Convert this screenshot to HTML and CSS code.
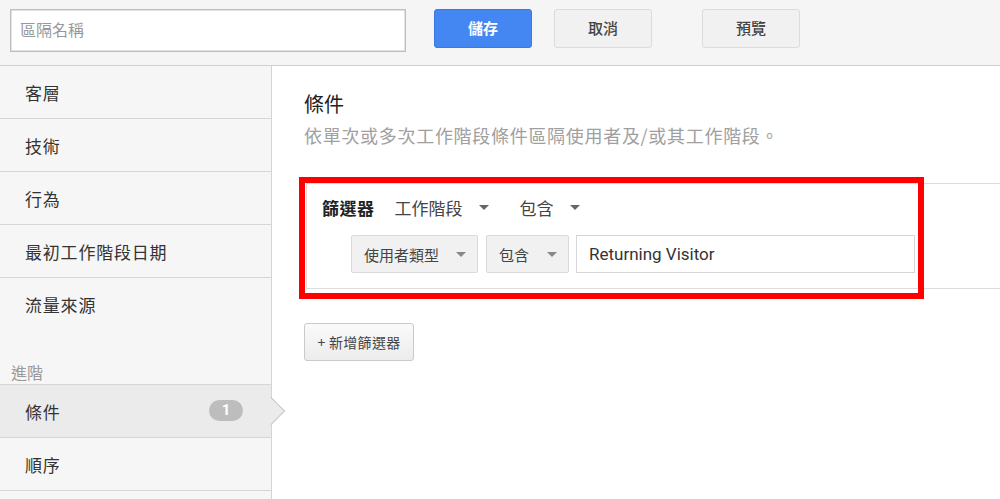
FILE: index.html
```html
<!DOCTYPE html>
<html>
<head>
<meta charset="utf-8">
<title>區隔</title>
<link rel="stylesheet" href="styles.css">
</head>
<body>

<div class="topbar">
	<input class="name_input" type="text" placeholder="區隔名稱">
	<button class="btn btn_save">儲存</button>
	<button class="btn btn_cancel">取消</button>
	<button class="btn btn_preview">預覽</button>
</div>

<div class="page">
	<div class="sidebar">
		<div class="nav_item">客層</div>
		<div class="nav_item">技術</div>
		<div class="nav_item">行為</div>
		<div class="nav_item">最初工作階段日期</div>
		<div class="nav_item nav_last">流量來源</div>
		<div class="nav_label">進階</div>
		<div class="nav_item nav_active">條件<span class="badge">1</span></div>
		<div class="nav_item">順序</div>
	</div>

	<div class="main">
		<div class="title">條件</div>
		<div class="subtitle">依單次或多次工作階段條件區隔使用者及/或其工作階段。</div>

		<div class="filter_box">
			<div class="filter_head">
				<span class="filter_label">篩選器</span>
				<span class="drop">工作階段<i class="caret"></i></span>
				<span class="drop">包含<i class="caret"></i></span>
			</div>
			<div class="filter_row">
				<div class="select sel_dim">使用者類型<i class="caret small"></i></div>
				<div class="select sel_op">包含<i class="caret small"></i></div>
				<div class="value_input">Returning Visitor</div>
			</div>
			<div class="highlight"></div>
		</div>

		<button class="add_btn">+ 新增篩選器</button>
	</div>
</div>

</body>
</html>
```

FILE: styles.css
```css
body {
	margin: 0;
	height: 499px;
	overflow: hidden;
	font-family: "Noto Sans CJK TC", Roboto, sans-serif;
	color: #333;
	background: white;
}

/* top bar */

.topbar {
	display: flex;
	align-items: flex-start;
	height: 56px;
	padding: 9px 0 0 10px;
	background: #f5f5f5;
	border-bottom: 1px solid #d0d0d0;
}

.name_input {
	box-sizing: border-box;
	width: 396px;
	height: 43px;
	margin: 0 28px 0 0;
	padding: 0 9px 3px;
	border: 1px solid #bdbdbd;
	box-shadow: inset 0 0 0 1px #e2e2e2;
	font-family: "Noto Sans CJK TC", sans-serif;
	font-size: 16px;
	background: white;
}

.name_input::placeholder {
	color: #999;
}

.btn {
	box-sizing: border-box;
	width: 98px;
	height: 39px;
	border-radius: 3px;
	font-family: "Noto Sans CJK TC", sans-serif;
	font-size: 15px;
	font-weight: 500;
	padding: 0 0 3px;
}

.btn_save {
	background: #4487f2;
	border: 1px solid #3a79e0;
	color: white;
	font-weight: bold;
	margin-right: 22px;
}

.btn_cancel, .btn_preview {
	background: #f1f1f1;
	border: 1px solid #dcdcdc;
	color: #444;
}

.btn_cancel {
	margin-right: 50px;
}

/* layout */

.page {
	display: flex;
	height: 433px;
}

.sidebar {
	width: 271px;
	flex-shrink: 0;
	background: #f6f6f6;
	border-right: 1px solid #d4d4d4;
}

.nav_item {
	position: relative;
	display: flex;
	align-items: center;
	height: 52px;
	padding-left: 25px;
	border-bottom: 1px solid #d6d6d6;
	font-size: 17px;
	letter-spacing: 0.8px;
	color: #333;
}

.nav_item.nav_last {
	border-bottom: none;
}

.nav_label {
	height: 55px;
	padding-left: 11px;
	box-sizing: border-box;
	padding-top: 32px;
	font-size: 16px;
	line-height: 20px;
	color: #999;
	border-bottom: 1px solid #d6d6d6;
}

.nav_active {
	background: #ebebeb;
}

.nav_active::after {
	content: "";
	position: absolute;
	right: -10px;
	top: 16px;
	width: 19px;
	height: 19px;
	background: #ebebeb;
	border-top: 1px solid #c8c8c8;
	border-right: 1px solid #c8c8c8;
	transform: rotate(45deg);
	z-index: 2;
}

.badge {
	position: absolute;
	left: 209px;
	top: 15px;
	width: 34px;
	height: 21px;
	border-radius: 11px;
	background: #bdbdbd;
	color: white;
	font-family: Roboto, sans-serif;
	font-weight: bold;
	font-size: 15px;
	line-height: 21px;
	text-align: center;
	letter-spacing: 0;
}

/* main */

.main {
	flex: 1;
	padding: 23px 0 0 32px;
	overflow: hidden;
}

.title {
	font-size: 20px;
	line-height: 30px;
	color: #222;
}

.subtitle {
	font-size: 18px;
	line-height: 28px;
	letter-spacing: 0.7px;
	color: #a0a0a0;
	margin-top: 2px;
	margin-bottom: 34px;
}

.filter_box {
	position: relative;
	margin-left: 2px;
	border: 1px solid #dcdcdc;
	border-right: none;
	box-sizing: border-box;
	height: 106px;
}

.filter_head {
	display: flex;
	align-items: center;
	height: 24px;
	padding: 11px 0 0 15px;
}

.filter_label {
	font-size: 17px;
	font-weight: bold;
	letter-spacing: 0.5px;
	color: #222;
	margin-right: 20px;
}

.drop {
	display: flex;
	align-items: center;
	font-size: 17px;
	color: #444;
	margin-right: 31px;
}

.caret {
	display: inline-block;
	width: 0;
	height: 0;
	margin-left: 16px;
	border-left: 5px solid transparent;
	border-right: 5px solid transparent;
	border-top: 5px solid #666;
}

.caret.small {
	border-top: 5px solid #888;
}

.filter_row {
	display: flex;
	margin: 16px 0 0 44px;
	height: 38px;
}

.select {
	display: flex;
	align-items: center;
	justify-content: space-between;
	box-sizing: border-box;
	height: 38px;
	padding: 0 11px 0 12px;
	background: #f1f1f1;
	border: 1px solid #dadada;
	border-radius: 2px;
	font-size: 15px;
	color: #444;
}

.sel_dim {
	width: 127px;
	margin-right: 8px;
}

.sel_op {
	width: 83px;
	margin-right: 7px;
}

.value_input {
	box-sizing: border-box;
	width: 339px;
	height: 38px;
	padding-left: 12px;
	border: 1px solid #d6d6d6;
	font-family: Roboto, sans-serif;
	font-size: 17px;
	line-height: 36px;
	color: #333;
	background: white;
}

.highlight {
	position: absolute;
	left: -8px;
	top: -7px;
	width: 625px;
	height: 122px;
	box-sizing: border-box;
	border: 6px solid #ff0000;
}

.add_btn {
	margin-top: 34px;
	width: 110px;
	height: 38px;
	padding: 0;
	border: 1px solid #cacaca;
	border-radius: 3px;
	background: linear-gradient(#fafafa, #ececec);
	font-family: "Noto Sans CJK TC", sans-serif;
	font-size: 14px;
	letter-spacing: 0.3px;
	color: #444;
}
```
